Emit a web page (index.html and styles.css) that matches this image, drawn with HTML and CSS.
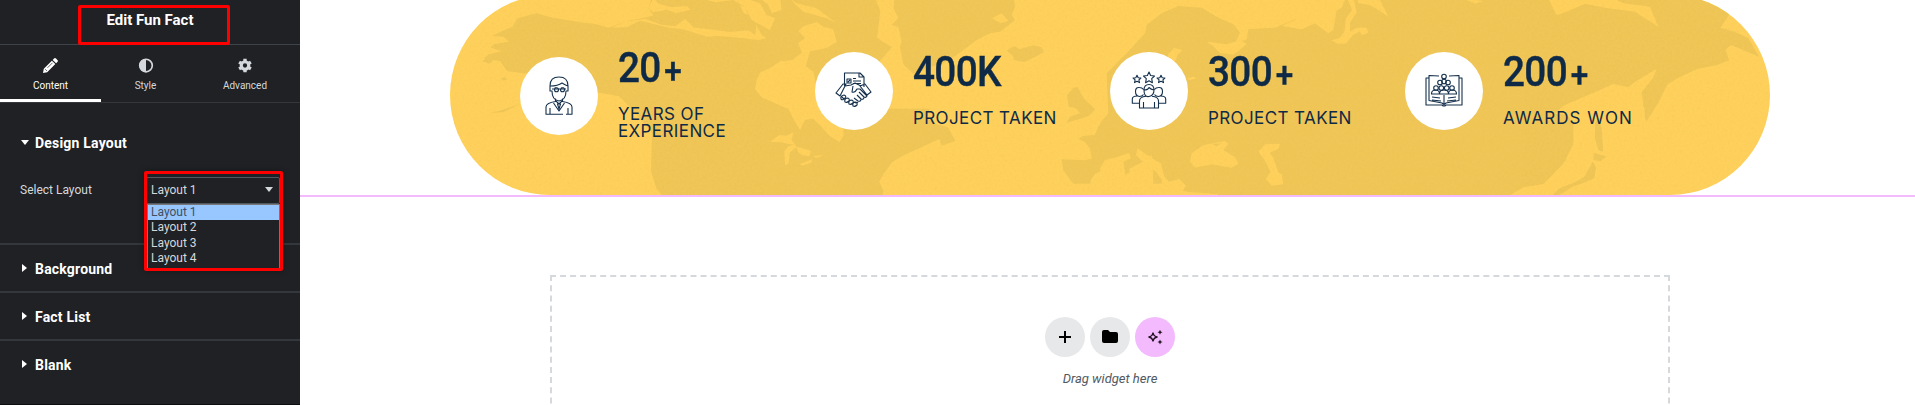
FILE: index.html
```html
<!DOCTYPE html>
<html lang="en">
<head>
<meta charset="utf-8">
<title>Edit Fun Fact</title>
<link rel="stylesheet" href="styles.css">
</head>
<body>
<div class="editor">
  <aside class="panel">
    <header class="panel-head">Edit Fun Fact<span class="mark mark-title"></span></header>
    <nav class="tabs">
      <a class="tab tab-content active"><svg width="15" height="15" viewBox="0 0 15 15"><path fill="currentColor" d="M0 15l.8-4.2 8.1-8.1 3.400 3.400-8.100 8.100zM9.700 1.900 11 .6q1-1 2 0l1.400 1.400q1 1 0 2L13.100 5.300z"/><path d="M2.200 11.200l1.700 1.700M4.500 9.800l5-5" stroke="#1f2124" stroke-width=".7"/></svg><span>Content</span></a>
      <a class="tab tab-style"><svg width="16" height="16" viewBox="0 0 16 16"><circle cx="8" cy="8" r="6.700" fill="none" stroke="currentColor" stroke-width="1.800"/><path fill="currentColor" d="M8 1a7 7 0 0 0 0 14z"/></svg><span>Style</span></a>
      <a class="tab tab-adv"><svg width="16" height="16" viewBox="0 0 16 16"><circle cx="8" cy="8" r="4" fill="none" stroke="currentColor" stroke-width="3.400"/><path stroke="currentColor" stroke-width="3.600" d="M8 .8v3M8 12.200v3M1.700 4.400l2.600 1.500M11.700 10.100l2.600 1.500M1.700 11.600l2.600-1.500M11.700 5.900l2.600-1.500"/></svg><span>Advanced</span></a>
    </nav>
    <section class="section open">
      <h2 class="section-title"><i class="caret down"></i>Design Layout</h2>
      <div class="control">
        <label>Select Layout</label>
        <div class="select">Layout 1<i class="caret down"></i>
          <ul class="options"><li class="picked">Layout 1</li><li>Layout 2</li><li>Layout 3</li><li>Layout 4</li></ul>
          <span class="mark mark-select"></span>
        </div>
      </div>
    </section>
    <section class="section"><h2 class="section-title"><i class="caret"></i>Background</h2></section>
    <section class="section"><h2 class="section-title"><i class="caret"></i>Fact List</h2></section>
    <section class="section"><h2 class="section-title"><i class="caret"></i>Blank</h2></section>
  </aside>
  <main class="canvas">
    <div class="widget">
      <div class="banner">
        <svg class="map" width="1320" height="200" viewBox="450 -5 1320 200">
          <defs><filter id="grain" x="0" y="0" width="100%" height="100%"><feTurbulence type="fractalNoise" baseFrequency=".4" numOctaves="2" seed="4"/><feColorMatrix values="0 0 0 0 .6  0 0 0 0 .42  0 0 0 0 .08  .6 .6 0 0 -.5"/></filter></defs>
          <g class="land" transform="translate(440 0) scale(.33333)">
            <path d="M188 92l30-12 14-25 58-15 42 12 78 13 60 8 36 10 28-10 40-12 66-14-15-22 14-42h662l20 50-10 80 30 20 15 8-60 70-35 10-15 55-80 10-16-42-17 7-50 24-26 34 10 28 50 16 30 30 22 25 30 18 12-20-2-60 20-20h240l-10 28 30 18 35 10 22 40-40 15-8-20-60 28-45 20-35 20-30 40-10 20 12 28-5 25H680l-30-30-17-55 3-115-60-70-40-40-60-10-60-40-100-5-45-10-70-10-20-30-50-5 15-15 40-10-35-10 10-10 45-8-15-15-35-2z"/>
            <path d="M125 183l14-6 20 6-12 8zM182 236l10-5 10 7-12 4zM150 338l30-6 60-20-50 25z"/>
            <path class="sea" d="M515 83l40-18 60-9 50 18 40 5 30-22 25 25 110 14 55-5 20 14 5-30 15 30 15 10-25 5-70-8-50-4-35 2-70-22-40-4-40-10-50-12-40 20z"/>
            <path class="sea" d="M640-5l16 16 36 10 50-2 10 10-45 10-25-10-42 8-15-12zM785-5l40 12 55-7 35 20 20 40 55 30 15-35-25-10-20-35-42-15zM960-5l25 20 10 25 30-10-5-40zM1050-5l20 15 60 15 60 45-30-15-70-20-22-20zM900 15l15 5 10 25-15-7zM1090 78l40-12 20 14 30 8 10 38-30 18-50 10-20 70-30 5-15-40 40-30-10-30 20-15-20-20zM950 240l10-22 30-14 30-20 50-5 50 36 10 50-10 90-25 5-15 30-15-25-20-38-80-35-20-25z"/>
            <path class="sea" d="M990 425l28-20 22 2 20-10-5 24 12 14-25-4-20-4zM1035 495l-2-42 12-14 20-5 5 8-20 15-5 36zM1068 440l20 5 25 8-5 16-20-3-12-8zM1078 492l40-14-5 10-25 9zM1120 468l33-3-25 9z"/>
          </g>
          <g class="land" transform="translate(800) scale(.33333)">
            <path d="M285-15h355l5 35-10 25 10 15-45 35-30 5-40 20-60 45-40 25-45 12-30 15-15 5-30-30-10-50 5-20-10-40-20-8 20-20-15-30z"/>
            <path d="M620 152l22-14 18 10 40-12 25 6 6 14-20 12-38 18-30-5-5-14zM800 368l10-18 30-10-12-15-22-5-5-35 20-22 12-2 10 20 15 22 12 10 16 15-20 20-38 12z"/>
            <path d="M785 478l70 3 20-5-5-30-15-20-20-10 15-8 35-4 10-26 30-12 35-40 60-70 30-90 50-70 50-40 60-5v500H820l-30-40z"/>
            <path class="sea" d="M575 55l30-15 20 22-22 8zM872 540l15-20 25-10 12-16 15-18 35-14 20 22 20-6 20-6 22-6 5 100H870z"/>
            <path d="M962 490l15-10 3 40-12 8z"/>
          </g>
          <g class="land" transform="translate(1100) scale(.33333)">
            <path d="M0 380v-10l25-30-5-120 60-60 55-60 5-25 45-35 50-22 70 5 50 30 45 20 20 25-15 32 35-12 5-30 80-5 60-25 40 10 45-5 20-20 35-20 40-90h1100l30 100-40 60 60 30H1050V600H350l-20-20-80-5-20-60-50-10-20-50-30 30-50 25-60-30-40 10z"/>
            <path class="sea" d="M555-10h145l10 40-10 60-15 10-40-30-40 18-60-10 20-10 25-10-15-25-35-13 20-20zM740-10h20l10 45-20 35 0 25 20-12 30 0 5 15-20 8-5-12-22 12-20 25-25 0-20-10 25-6 15-20 5-40 18-25zM770-10h65l30 60-30-20-25-15-35-5zM320 125l60 8 40-12 20 10-20 18-20 15-40-5-20-20zM205 162l18-18 25 6-15 14-12 30-20 10zM260 235l20-5 10 5-20 5z"/>
            <path class="sea" d="M0 505l15-25 40-10 32-12 5 15-14 20 30 35 30 10 25 22 18 15 5-35-18-25-30-20-30-30 5-20 35 25 35 20 10 40 15 15 30-8 20 20-10 15 50 10 55 0v25H90l-5-60-25 15-20-10-40 5zM270 485l5-25 35-25 65-12 10 8-15 20 35 20 10 20-20 12-60-10-50 10zM475 455l20-22 45-2-5 15-25 12 10 15 15 45 10 5 5 30-35 4-18-20 15-22-18-35z"/>
            <path d="M70 485l17-8 2 40-13 8zM335 432l30-2-15 8z"/>
          </g>
          <g class="land" transform="translate(1390) scale(.33333)">
            <path d="M0-20h470l10 55 40 10 90-30 90 10 50 32 50-5 20 20 40-5 60-3 110 30 45 20 32 56-60-25-25-10-15 15 10 30-35 15-60 12-55 25-40 25-55 80-12-20-5-40 35-45 10-25-60 35-25 20-45-10-80 35-70 30-25 25 35 0 20 30 0 60-30 60-60 60-60 10-42 25 20 15 35-5 10 20-25 20 10 25H0z"/>
            <path class="sea" d="M470-15h180l50 25 80 10 25 60-70-45-90-12-60-12-45 20-40 15-10-20zM220-5l60 8-25 8z"/>
            <path d="M615 370l10-15 10 30 5 70-15-5-10-35zM612 458l38 12-20 14-20-4zM608 485l10 15-5 35-35 15-30 10-40 25-25 5 25-25 50-20 25-15zM765 350l-3-50 12-20 40-30 30-30-10 30-30 60-35 55z"/>
          </g>
          <rect x="450" y="-5" width="1320" height="200" filter="url(#grain)" opacity=".25"/>
        </svg>
        <div class="fact tall">
          <div class="badge"><svg width="40" height="40" viewBox="0 0 40 40"><path d="M11 13v-3Q11 1 20 1t9 9v3M11 10q8 0 12-3 3 2 6 3M11 10v5h2q0 9 7 10 7-1 7-10h2v-5M13 13h14M16 11.800h2q1.500 0 1.500 2t-2 2q-2 0-2-2zM22.500 11.800h2q1 0 1 2t-2 2q-2 0-2-2zM16.500 22.500v3Q7 27 7 31v7.300h17M27 38.300h6V31q0-4-9.500-5.500v-3M11 38v-6M29 38v-6M14.500 27l5.500 8 5.500-8M17 25l3 3 3-3M18.500 28h3l-1.500 5z"/></svg></div>
          <div class="fact-text"><strong>20<b>+</b></strong><p>YEARS OF<br>EXPERIENCE</p></div>
        </div>
        <div class="fact">
          <div class="badge"><svg width="40" height="40" viewBox="0 0 40 40"><path d="M10.500 15V2H26l4 4v10M25 2v4h5M13 8h4v4h-4zM14 11l2-2M19 7.500h3M19 10h8M19 12.500h8M9 13l-7 9 4 3 6-12zM31 13l6 8-4 3-7-9zM11 15l6-1 4-2 6 3M19 15l-1 6q3 1 5-3h3l7 7q-1 2-3 1l-5-5M30 26q0 3-3 2l-4-4M27 28q0 3-3 2l-4-3M24 31q-1 2-4 0M7 25l3 3M10 24q-4 1-3 4 2 2 4-1 2-2-1-3zM13 27q-3 1-2 4 2 1 4-1 1-3-2-3zM17 29q-3 1-2 4 2 1 4-1 1-3-2-3zM21 31q-3 1-2 4 2 1 4-1 1-3-2-3z"/></svg></div>
          <div class="fact-text"><strong>400K</strong><p>PROJECT TAKEN</p></div>
        </div>
        <div class="fact">
          <div class="badge"><svg width="40" height="40" viewBox="0 0 40 40"><path d="m20 1 1.600 3.500 3.900.5-2.800 2.700.7 4-3.400-1.900-3.400 1.900.7-4L14.500 5l3.900-.5zM8 4.300l1.200 2.400 2.700.3-2 1.900.6 2.700L8 10.300l-2.500 1.300.6-2.700-2-1.900 2.700-.3zM32 4.300l1.200 2.400 2.700.3-2 1.900.6 2.700-2.500-1.300-2.500 1.300.6-2.700-2-1.900 2.700-.3zM15 19q0-5.500 5-5.500t5 5.500-5 6.500-5-6.500zM15 19q4 0 5-2.500 2 2 5 2.500M14.500 23.500q-1.500 2-4 2-4-.5-4-5t4-4q2.500 0 4 2M25.500 23.500q1.500 2 4 2 4-.5 4-5t-4-4q-2.500 0-4 2M10.500 32.300H3.300V28q0-3 5-3M29.500 32.300h7.200V28q0-3-5-3M17 25.300q-6.500.7-6.500 4.700v7h19v-7q0-4-6.500-4.700M14.500 37v-6M25.500 37v-6"/></svg></div>
          <div class="fact-text"><strong>300<b>+</b></strong><p>PROJECT TAKEN</p></div>
        </div>
        <div class="fact">
          <div class="badge"><svg width="40" height="40" viewBox="0 0 40 40"><path d="M5 7H2v27h16q2 2 4 0h16V7h-3M15 5 5 4.500v25l13 2.500 2 1.500 2-1.500 13-2.500v-25L25 5M20 24v9M8 26l8 1M8 29l9 1M32 26l-8 1M32 29l-9 1M7 23h26M7.500 23q0-4 4-4t4 4q0-4 4.500-4t4.500 4q0-4 4-4t4 4"/><circle cx="20" cy="5.500" r="2.300"/><circle cx="16" cy="11.500" r="2.300"/><circle cx="24" cy="11.500" r="2.300"/><circle cx="20" cy="10.500" r="2.300"/><circle cx="12" cy="17" r="2.300"/><circle cx="17.300" cy="17" r="2.300"/><circle cx="22.700" cy="17" r="2.300"/><circle cx="28" cy="17" r="2.300"/></svg></div>
          <div class="fact-text wide"><strong>200<b>+</b></strong><p>AWARDS WON</p></div>
        </div>
      </div>
    </div>
    <div class="drop">
      <div class="actions">
        <span class="round"><svg width="14" height="14" viewBox="0 0 14 14"><path d="M7 1v12M1 7h12" stroke="#000" stroke-width="2"/></svg></span>
        <span class="round"><svg width="16" height="14" viewBox="0 0 16 14"><path d="M2 0h4l2 2h6q2 0 2 2v7q0 2-2 2H2q-2 0-2-2V2q0-2 2-2z"/></svg></span>
        <span class="round ai"><svg width="16" height="16" viewBox="0 0 16 16"><path fill="none" stroke="#20121f" stroke-width="1.300" d="M6 3.500Q6.500 7.500 10.500 8 6.500 8.500 6 12.500 5.500 8.500 1.500 8 5.500 7.500 6 3.500z"/><path fill="#20121f" d="m13 .7.8 1.700 1.700.8-1.700.8L13 5.700 12.200 4l-1.700-.8 1.700-.8zM13 10.500l.8 1.700 1.700.8-1.700.8-.8 1.700-.8-1.700-1.700-.8 1.700-.8z"/></svg></span>
      </div>
      <p>Drag widget here</p>
    </div>
  </main>
</div>
</body>
</html>
```
FILE: styles.css
```css
* { box-sizing: border-box; }
body { margin: 0; background: #fff; font-family: Roboto, "Liberation Sans", sans-serif; overflow: hidden; }
p, h2, ul { margin: 0; padding: 0; }
.editor { display: flex; height: 405px; overflow: hidden; }

.panel { width: 300px; flex: none; background: #1f2124; color: #d5d8dc; border-bottom: 1px solid #0c0d0e; }
.panel-head { position: relative; height: 45px; padding-top: 10px; border-bottom: 1px solid #3f444b; color: #fff; font-size: 15px; font-weight: 700; line-height: 20px; text-align: center; }
.mark { position: absolute; border: 3px solid #f00; border-radius: 2px; pointer-events: none; }
.mark-title { left: 78px; top: 5px; width: 152px; height: 40px; }
.tabs { display: flex; height: 58px; border-bottom: 1px solid #34383c; }
.tab { display: flex; flex-direction: column; align-items: center; padding-top: 13px; gap: 5px; font-size: 10px; line-height: 16px; font-weight: 400; }
.tab svg { height: 15px; flex: none; }
.tab-content { width: 101px; }
.tab-style { width: 89px; }
.tab-adv { width: 110px; }
.tab.active { color: #fff; border-bottom: 3px solid #fff; }

.section { height: 48px; padding: 0 20px; border-bottom: 2px solid #34383c; }
.section:last-child { border: 0; }
.section.open { height: 142px; padding-top: 17px; }
.section-title { display: flex; align-items: center; height: 47px; color: #fff; font-size: 14px; font-weight: 700; letter-spacing: .2px; }
.open .section-title { height: 46px; }
.caret { width: 15px; flex: none; }
.caret::before { content: ""; display: block; width: 0; border-left: 5px solid #fff; border-top: 4px solid transparent; border-bottom: 4px solid transparent; margin-left: 2px; margin-top: -1px; }
.caret.down::before { border: 4px solid transparent; border-top: 5px solid #fff; border-bottom: 0; margin-left: 1px; }
.control { display: flex; justify-content: space-between; align-items: center; height: 28px; margin-top: 10px; font-size: 12px; }
.select { position: relative; display: flex; align-items: center; justify-content: space-between; width: 134px; height: 27px; padding-left: 4px; border: 1px solid #515962; border-radius: 2px; }
.select .caret.down::before { border-top-color: #d5d8dc; }
.options { position: absolute; z-index: 2; left: 0; top: 26px; width: 133px; height: 65px; background: #1f2124; border: 1px solid #777; list-style: none; }
.options li { height: 15.500px; line-height: 15.500px; padding-left: 3px; }
.options .picked { background: #98c6ff; color: #43505d; }
.mark-select { z-index: 3; left: -3px; top: -7px; width: 139px; height: 100px; box-shadow: 0 0 6px #0005; }

.canvas { flex: 1; min-width: 0; }
.widget { display: flow-root; height: 197px; border-bottom: 2px solid #f3bafd; padding-left: 150px; }
.banner { position: relative; display: flex; width: 1320px; height: 200px; margin-top: -5px; padding-left: 70px; border-radius: 100px; background: #ffd15c; overflow: hidden; color: #0f2a47; }
.map { position: absolute; left: 0; top: 0; }
.land { fill: #f0c657; }
.sea { fill: #ffd15c; }
.fact { position: relative; display: flex; gap: 20px; width: 295px; padding-top: 57px; }
.badge { display: flex; align-items: center; justify-content: center; width: 78px; height: 78px; border-radius: 50%; background: #fff; flex: none; }
.badge svg { fill: none; stroke: #15304d; stroke-width: 1.100; stroke-linejoin: round; }
.fact strong { display: block; height: 46px; font-size: 43px; line-height: 39px; font-weight: 500; letter-spacing: -.7px; transform: scaleX(.9); transform-origin: 0 0; -webkit-text-stroke: .4px #0f2a47; white-space: nowrap; }
.fact b { position: relative; top: 1px; font-size: 35px; font-weight: 500; margin-left: 4px; }
.fact p { font: 400 17px/17px Inter, sans-serif; letter-spacing: .4px; margin-top: 12px; white-space: nowrap; }
.fact .wide p { letter-spacing: 1px; }
.tall { padding-top: 53px; }
.tall .badge { margin-top: 9px; }

.drop { width: 1120px; height: 200px; margin: 78px 0 0 250px; padding-top: 40px; border: 2px dashed #d5d8dc; text-align: center; }
.actions { display: flex; justify-content: center; gap: 5px; }
.round { display: flex; align-items: center; justify-content: center; width: 40px; height: 40px; border-radius: 50%; background: #e6e8ea; }
.round.ai { background: #f3bafd; }
.drop p { margin-top: 14px; color: #515962; font-size: 13px; line-height: 16px; font-style: italic; }
```
